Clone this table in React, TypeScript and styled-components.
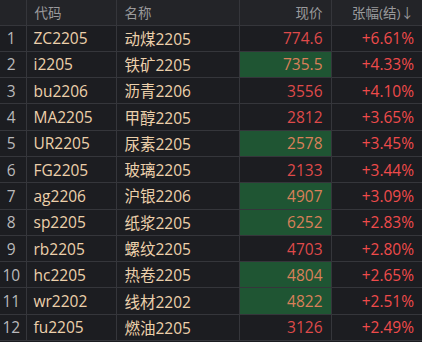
import React from 'react'
import styled, { createGlobalStyle } from 'styled-components'

const GlobalStyle = createGlobalStyle`
  html, body {
    margin: 0;
    padding: 0;
    background: #1c1d21;
  }
  body {
    font-family: "Open Sans", "Noto Sans CJK SC", sans-serif;
  }
`

type Quote = {
  code: string
  name: string
  price: string
  change: string
  up: boolean
}

const quotes: Quote[] = [
  { code: 'ZC2205', name: '动煤2205', price: '774.6', change: '+6.61%', up: false },
  { code: 'i2205', name: '铁矿2205', price: '735.5', change: '+4.33%', up: true },
  { code: 'bu2206', name: '沥青2206', price: '3556', change: '+4.10%', up: false },
  { code: 'MA2205', name: '甲醇2205', price: '2812', change: '+3.65%', up: false },
  { code: 'UR2205', name: '尿素2205', price: '2578', change: '+3.45%', up: true },
  { code: 'FG2205', name: '玻璃2205', price: '2133', change: '+3.44%', up: false },
  { code: 'ag2206', name: '沪银2206', price: '4907', change: '+3.09%', up: true },
  { code: 'sp2205', name: '纸浆2205', price: '6252', change: '+2.83%', up: true },
  { code: 'rb2205', name: '螺纹2205', price: '4703', change: '+2.80%', up: false },
  { code: 'hc2205', name: '热卷2205', price: '4804', change: '+2.65%', up: true },
  { code: 'wr2202', name: '线材2202', price: '4822', change: '+2.51%', up: true },
  { code: 'fu2205', name: '燃油2205', price: '3126', change: '+2.49%', up: false },
]

const Table = styled.table`
  width: 422px;
  border-collapse: collapse;
  table-layout: fixed;
  background: #1c1d21;
`

const HeadRow = styled.tr`
  height: 25px;
  background: #232428;
`

const HeadCell = styled.th<{ $align?: 'left' | 'right' }>`
  padding: 0 8px;
  border: 1px solid #35363b;
  border-top: none;
  font-size: 13.5px;
  font-weight: normal;
  color: #9a9a9c;
  text-align: ${(p) => p.$align ?? 'left'};
  white-space: nowrap;
  &:first-child { border-left: none; }
  &:last-child { border-right: none; }
`

const Row = styled.tr`
  height: 26.3px;
`

const Cell = styled.td`
  padding: 0 8px;
  border: 1px solid #35363b;
  font-size: 15.5px;
  white-space: nowrap;
  &:first-child { border-left: none; }
  &:last-child { border-right: none; }
`

const IndexCell = styled(Cell)`
  padding: 0 3px 0 0;
  text-align: center;
  color: #b9b9bb;
`

const CodeCell = styled(Cell)`
  padding-left: 7px;
  color: #ecd0ab;
`

const NameCell = styled(Cell)`
  color: #ecd0ab;
`

const PriceCell = styled(Cell)<{ $up: boolean }>`
  text-align: right;
  color: ${(p) => (p.$up ? '#d9805a' : '#df4a4a')};
  background: ${(p) => (p.$up ? '#1f5533' : 'transparent')};
  background-clip: padding-box;
`

const ChangeCell = styled(Cell)`
  text-align: right;
  color: #ef4b4b;
`

export default function App() {
  return (
    <>
      <GlobalStyle />
      <Table>
        <colgroup>
          <col style={{ width: 26 }} />
          <col style={{ width: 90 }} />
          <col style={{ width: 123 }} />
          <col style={{ width: 92 }} />
          <col style={{ width: 91 }} />
        </colgroup>
        <thead>
          <HeadRow>
            <HeadCell />
            <HeadCell>代码</HeadCell>
            <HeadCell>名称</HeadCell>
            <HeadCell $align="right">现价</HeadCell>
            <HeadCell $align="right">张幅(结)↓</HeadCell>
          </HeadRow>
        </thead>
        <tbody>
          {quotes.map((q, i) => (
            <Row key={q.code}>
              <IndexCell>{i + 1}</IndexCell>
              <CodeCell>{q.code}</CodeCell>
              <NameCell>{q.name}</NameCell>
              <PriceCell $up={q.up}>{q.price}</PriceCell>
              <ChangeCell>{q.change}</ChangeCell>
            </Row>
          ))}
        </tbody>
      </Table>
    </>
  )
}
